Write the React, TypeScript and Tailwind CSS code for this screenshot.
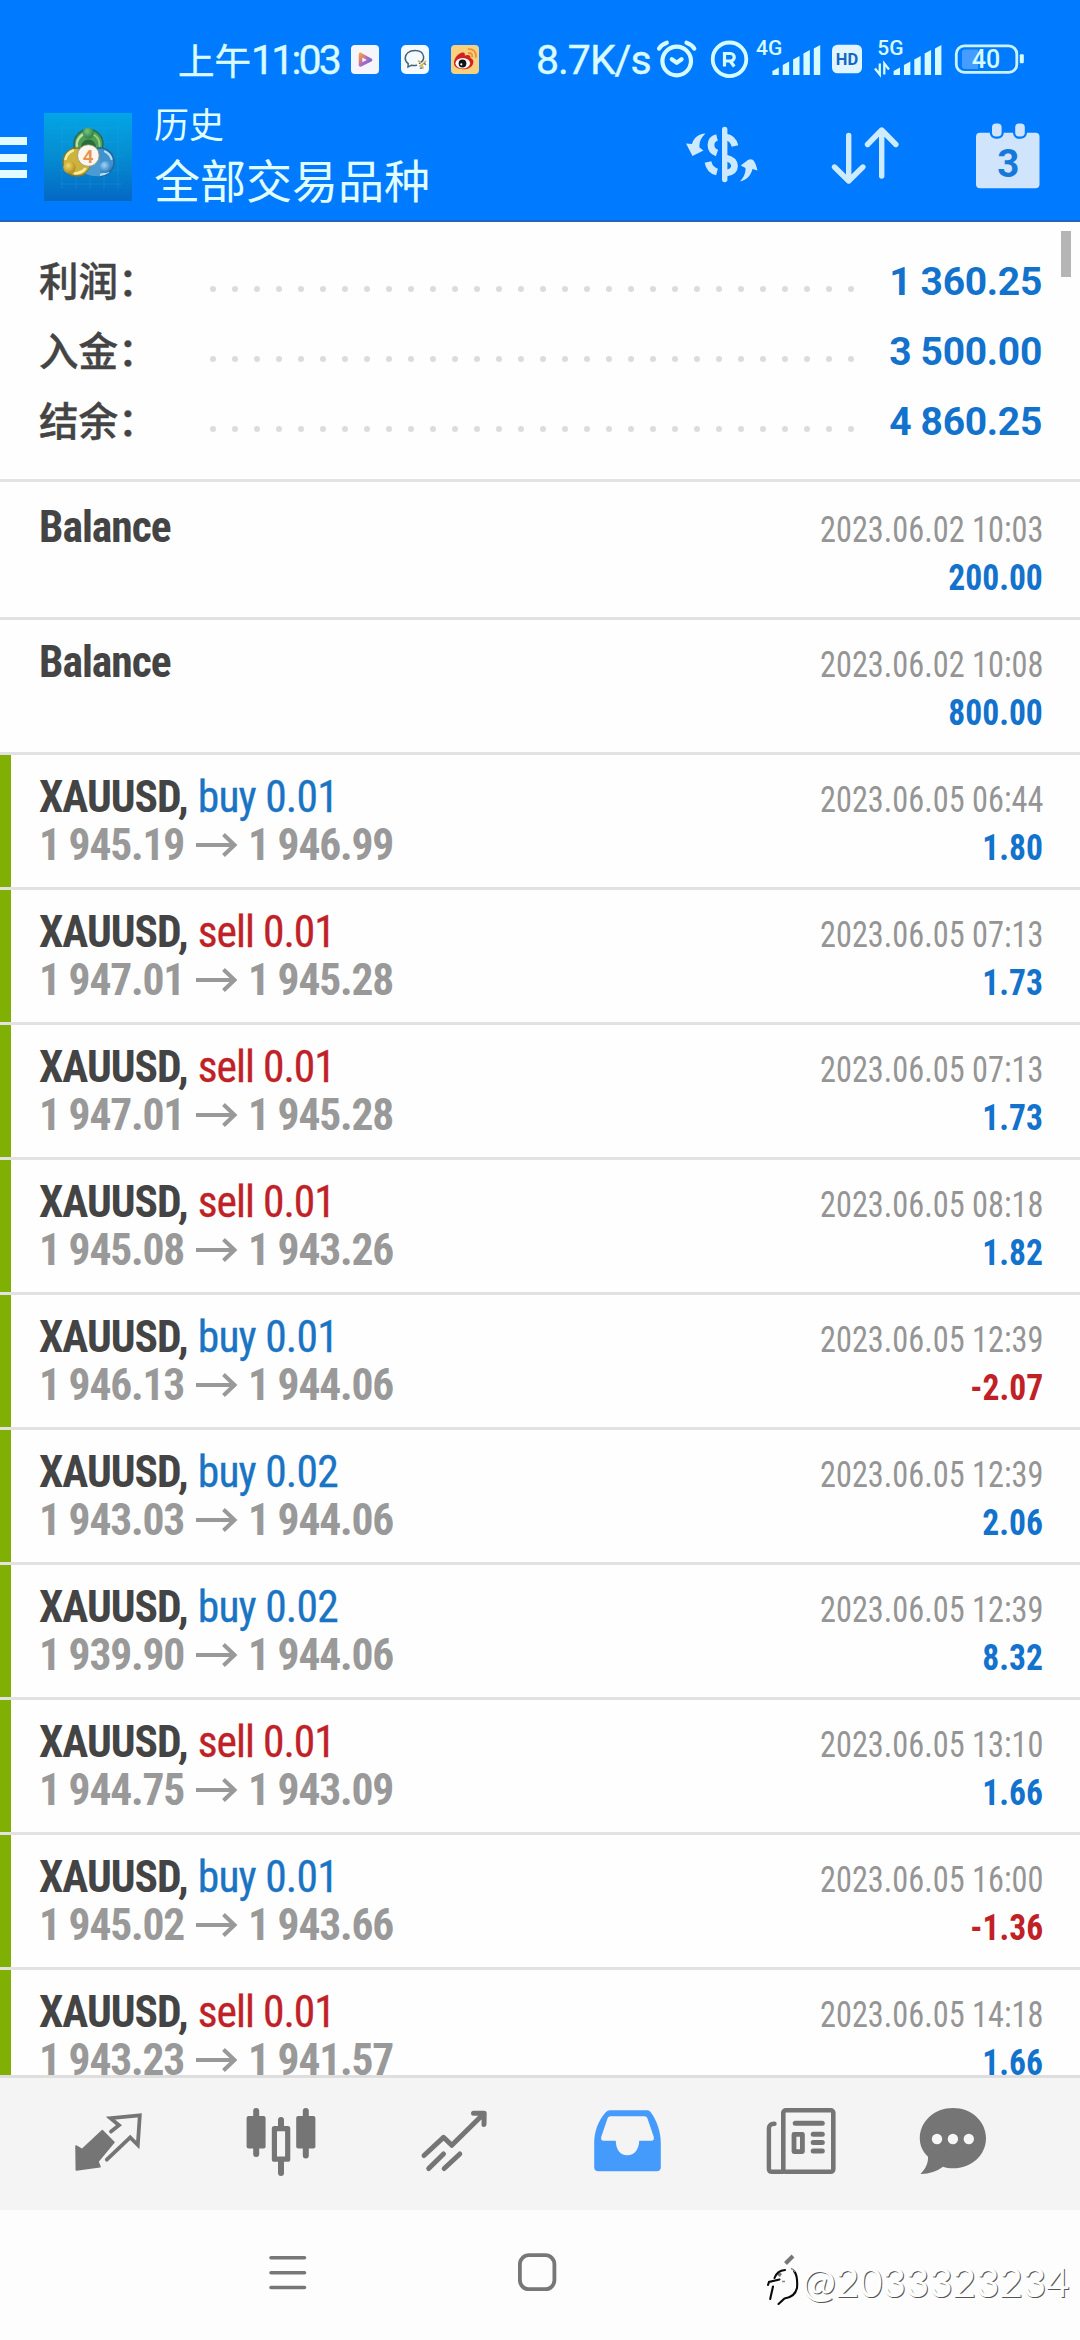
import type { ReactNode } from "react";

type Trade = {
  kind: "balance" | "buy" | "sell";
  volume?: string;
  open?: string;
  close?: string;
  time: string;
  profit: string;
};

const summary = [
  { label: "利润：", value: "1 360.25" },
  { label: "入金：", value: "3 500.00" },
  { label: "结余：", value: "4 860.25" },
];

const trades: Trade[] = [
  { kind: "balance", time: "2023.06.02 10:03", profit: "200.00" },
  { kind: "balance", time: "2023.06.02 10:08", profit: "800.00" },
  { kind: "buy", volume: "0.01", open: "1 945.19", close: "1 946.99", time: "2023.06.05 06:44", profit: "1.80" },
  { kind: "sell", volume: "0.01", open: "1 947.01", close: "1 945.28", time: "2023.06.05 07:13", profit: "1.73" },
  { kind: "sell", volume: "0.01", open: "1 947.01", close: "1 945.28", time: "2023.06.05 07:13", profit: "1.73" },
  { kind: "sell", volume: "0.01", open: "1 945.08", close: "1 943.26", time: "2023.06.05 08:18", profit: "1.82" },
  { kind: "buy", volume: "0.01", open: "1 946.13", close: "1 944.06", time: "2023.06.05 12:39", profit: "-2.07" },
  { kind: "buy", volume: "0.02", open: "1 943.03", close: "1 944.06", time: "2023.06.05 12:39", profit: "2.06" },
  { kind: "buy", volume: "0.02", open: "1 939.90", close: "1 944.06", time: "2023.06.05 12:39", profit: "8.32" },
  { kind: "sell", volume: "0.01", open: "1 944.75", close: "1 943.09", time: "2023.06.05 13:10", profit: "1.66" },
  { kind: "buy", volume: "0.01", open: "1 945.02", close: "1 943.66", time: "2023.06.05 16:00", profit: "-1.36" },
  { kind: "sell", volume: "0.01", open: "1 943.23", close: "1 941.57", time: "2023.06.05 14:18", profit: "1.66" },
];

const dots = Array.from({ length: 30 }, (_, i) => i);

function SignalBars({ x }: { x: number }) {
  const tops = [31.5, 25.5, 20, 14, 9];
  return (
    <g fill="#d6fbff">
      {tops.map((t, i) => {
        const l = x + i * 10.35;
        return <path key={i} d={`M${l} ${t + 3.5}L${l + 6.4} ${t}V39H${l}Z`} />;
      })}
    </g>
  );
}

function StatusBar() {
  return (
    <div className="flex h-[98px] items-start pt-[36px] text-[#d9fbff]">
      <div className="ml-[178px] flex h-12 w-[163px] shrink-0 items-center whitespace-nowrap">
        <span className="font-['Noto_Sans_CJK_SC',sans-serif] text-[36.5px] leading-[42px] [-webkit-text-stroke:0.5px_#d9fbff]">上午</span>
        <span className="font-['Roboto',sans-serif] text-[41px] leading-[48px] tracking-[-2.8px] [-webkit-text-stroke:0.4px_#d9fbff]">11:03</span>
      </div>
      <svg className="ml-[10px] mt-[9px] shrink-0" width="28" height="29" viewBox="0 0 28 29">
        <defs>
          <linearGradient id="play" x1="0" y1="0" x2="1" y2="1">
            <stop offset="0" stopColor="#f19a4b" />
            <stop offset=".5" stopColor="#b46ab8" />
            <stop offset="1" stopColor="#5a6fe0" />
          </linearGradient>
        </defs>
        <rect width="28" height="29" rx="4" fill="#f4f6fb" />
        <path d="M9.5 9.500v10.500L19.500 15Z" fill="none" stroke="url(#play)" strokeWidth="3.600" strokeLinejoin="round" />
      </svg>
      <svg className="ml-[22px] mt-[9px] shrink-0" width="28" height="29" viewBox="0 0 28 29">
        <rect width="28" height="29" rx="5" fill="#f3fbff" />
        <path d="M18.5 18.3C21 17 23 15 22.6 11.5C22 7.5 18.500 5.500 14 5.500C8 5.500 4.200 9 4.200 13C4.200 15.800 5.500 17.500 7.200 18.700L7 22L10.500 20.200C12 20.600 14 20.700 15.500 20.300" fill="none" stroke="#45617a" strokeWidth="1.5" strokeLinecap="round" />
        <path d="M17.500 16l2 1.500M24.500 16.500l-1.800 2M19 21l2.500-1.500M22 23l-1-2" stroke="#d9b55a" strokeWidth="1.800" strokeLinecap="round" />
        <path d="M23.300 18.500l1.200.9M20.500 23l-1 .3" stroke="#5b7f96" strokeWidth="1.500" strokeLinecap="round" />
      </svg>
      <svg className="ml-[22px] mt-[9px] shrink-0" width="28" height="29" viewBox="0 0 28 29">
        <rect width="28" height="29" rx="4" fill="#f8d07e" />
        <path d="M3 18C3 12 9 6.500 12.500 7.500C14 8 14 9.500 13.800 10.500C17 9.300 20 9.800 19.500 13C22 14 23 16 22 19C20.500 23 15.500 24.500 12 24.300C7 24 3 22 3 18Z" fill="#d0231e" />
        <ellipse cx="11.800" cy="18.300" rx="7.300" ry="5.200" fill="#fff" />
        <circle cx="11.500" cy="18.500" r="3.900" fill="#151515" />
        <circle cx="10.300" cy="19.300" r="1.100" fill="#fff" />
        <path d="M17.500 4.200C22 3.500 25.500 7 24.800 12M17.800 8C20.300 7.800 21.500 9.300 21.200 11.500" fill="none" stroke="#e8933a" strokeWidth="1.800" strokeLinecap="round" />
      </svg>
      <span className="ml-[57px] h-12 w-[114px] shrink-0 whitespace-nowrap font-['Roboto',sans-serif] text-[41px] leading-[48px] tracking-[-1px] [-webkit-text-stroke:0.4px_#d9fbff]">
        8.7K/s
      </span>
      <svg className="shrink-0" width="50" height="48" viewBox="0 0 50 48" fill="none" stroke="#d6fbff" strokeWidth="4.200" strokeLinecap="round" strokeLinejoin="round">
        <circle cx="26.700" cy="25" r="14.300" />
        <path d="M21.800 23.200l4.900 3.600 4.900-3.600M9 12.600Q11.500 8.500 16.800 6.700M44.300 12.600Q41.800 8.500 36.500 6.700" />
      </svg>
      <svg className="shrink-0" width="54" height="48" viewBox="50 0 54 48">
        <circle cx="79.500" cy="23.300" r="16.800" fill="none" stroke="#d6fbff" strokeWidth="3.800" />
        <path d="M74.500 30.500V17.500H80.500A3.600 3.600 0 0 1 80.500 25H75M80.500 25.500L84.300 30.500" fill="none" stroke="#d6fbff" strokeWidth="3.200" />
      </svg>
      <svg className="shrink-0" width="72" height="48" viewBox="104 0 72 48">
        <text x="106" y="18.700" fill="#d6fbff" fontFamily="Roboto, sans-serif" fontSize="21" fontWeight="500">4G</text>
        <SignalBars x={122.4} />
      </svg>
      <svg className="shrink-0" width="42" height="48" viewBox="176 0 42 48">
        <rect x="182" y="8.700" width="30" height="28.600" rx="5.500" fill="#e0f5ff" />
        <text x="197" y="29" textAnchor="middle" fill="#1467c4" fontFamily="Roboto, sans-serif" fontSize="16.500" fontWeight="700">HD</text>
      </svg>
      <svg className="shrink-0" width="80" height="48" viewBox="218 0 80 48">
        <text x="227.300" y="18.700" fill="#d6fbff" fontFamily="Roboto, sans-serif" fontSize="21" fontWeight="500">5G</text>
        <path d="M229.800 27.500V38.500L225 32.500M234.300 38.500V27.500L239 33.500" fill="none" stroke="#d6fbff" strokeWidth="2.300" />
        <SignalBars x={243.6} />
      </svg>
      <svg className="shrink-0" width="82" height="48" viewBox="298 0 82 48">
        <rect x="306.300" y="9.800" width="60.500" height="26.600" rx="8" fill="none" stroke="#c9f4ff" strokeWidth="2.800" />
        <rect x="369.800" y="18.300" width="4" height="9" rx="1" fill="#d6fbff" />
        <path d="M315 13.500H328V33H315A3 3 0 0 1 312 30V16.500A3 3 0 0 1 315 13.500Z" fill="#469cff" />
        <text x="336" y="32.200" textAnchor="middle" fill="#d6fbff" fontFamily="Roboto, sans-serif" fontSize="25" fontWeight="500">40</text>
      </svg>
    </div>
  );
}

function Logo() {
  return (
    <svg className="ml-[17px] mt-[15px] shrink-0" width="88" height="88" viewBox="0 0 88 88">
      <defs>
        <linearGradient id="logoBg" x1="0" y1="0" x2="0" y2="1">
          <stop offset="0" stopColor="#03a5e6" />
          <stop offset=".45" stopColor="#058fd2" />
          <stop offset="1" stopColor="#0468c4" />
        </linearGradient>
        <radialGradient id="gBall" cx=".4" cy=".35" r=".7"><stop offset="0" stopColor="#7cc47a" /><stop offset="1" stopColor="#237a45" /></radialGradient>
        <radialGradient id="yBall" cx=".4" cy=".35" r=".7"><stop offset="0" stopColor="#f3da62" /><stop offset="1" stopColor="#a8861c" /></radialGradient>
        <radialGradient id="bBall" cx=".4" cy=".35" r=".7"><stop offset="0" stopColor="#9fd6f5" /><stop offset="1" stopColor="#1f6fb8" /></radialGradient>
      </defs>
      <rect width="88" height="88" fill="url(#logoBg)" />
      <path d="M16 15H78M16 29H78M16 43H78M16 57H78M16 71H78M18 12V76M32 12V76M46 12V76M60 12V76M74 12V76" stroke="#2fb0e8" strokeOpacity=".22" />
      <circle cx="44.500" cy="31" r="14.500" fill="#4f9d52" stroke="#2a6b50" strokeWidth="1.500" />
      <path d="M33 34A11.500 11.500 0 0 1 42 20.500" fill="none" stroke="#b9dfa6" strokeWidth="2.400" strokeLinecap="round" />
      <path d="M48 21A11 11 0 0 1 55.500 33" fill="none" stroke="#8fce84" strokeWidth="2" strokeLinecap="round" />
      <circle cx="44.500" cy="34" r="7.500" fill="#2b6a3c" />
      <circle cx="56" cy="49" r="14" fill="#3f92cd" stroke="#23669c" strokeWidth="1.500" />
      <path d="M61 38.500A12 12 0 0 1 67.500 46M47 60Q56 64.500 64 59" fill="none" stroke="#b4def6" strokeWidth="2.200" strokeLinecap="round" />
      <circle cx="33" cy="49" r="14" fill="#cdb23c" stroke="#7d7a35" strokeWidth="1.500" />
      <path d="M21.500 46A12 12 0 0 1 29 37.500M31 60.500Q37 60 41 56" fill="none" stroke="#f8ee9c" strokeWidth="2.600" strokeLinecap="round" />
      <path d="M41 60.500C45 58 47 54 47.300 49L56 44V63C50 63.500 45 62.500 41 60.500Z" fill="#4a9bd4" />
      <circle cx="44.300" cy="20" r="5.600" fill="url(#gBall)" />
      <circle cx="25.500" cy="54.500" r="6.200" fill="url(#yBall)" />
      <circle cx="61.500" cy="54" r="6" fill="url(#bBall)" />
      <circle cx="44.300" cy="42.500" r="10.800" fill="#fbf6f0" stroke="#8c8f6a" strokeWidth=".8" />
      <text x="44.300" y="49.500" textAnchor="middle" fill="#e8934a" fontFamily="Roboto, sans-serif" fontSize="19" fontWeight="600">4</text>
    </svg>
  );
}

function Toolbar() {
  return (
    <div className="flex h-[122px] items-start">
      <div className="mt-[39px] flex w-[27px] shrink-0 flex-col gap-[8.500px]">
        <i className="h-2 bg-[#e2fbff]" />
        <i className="h-2 bg-[#e2fbff]" />
        <i className="h-2 bg-[#e2fbff]" />
      </div>
      <Logo />
      <div className="ml-[22px] w-[290px] pt-[3px] font-['Noto_Sans_CJK_SC',sans-serif] font-normal text-[#e0fdff]">
        <div className="text-[35px] leading-[44px]">历史</div>
        <div className="mt-[5px] text-[46px] leading-[56px]">全部交易品种</div>
      </div>
      <svg className="ml-auto mt-[22px] shrink-0" width="84" height="68" viewBox="0 0 84 68" fill="none" stroke="#cde9fd">
        <path d="M44.700 9.500V59.500" strokeWidth="5.400" strokeLinecap="round" />
        <path d="M37 17.500Q31 19 31 25Q31 31 37 33M28 42Q29.500 50 37 52M46 17Q53 18 55 26M46 38Q54.500 40 54.500 46Q54.500 52 46 53" strokeWidth="6.800" />
        <path d="M25.500 13.500C18 14 13.500 18 12 24L6 23.500L12.500 36L23.500 30.500L19.500 27.500C19 22 21.500 17 25.500 13.500ZM60 61.500C63.500 58 65.800 53 65.500 48L60.700 45.500L68 40C72 38 75 39.500 77.500 50.500L72.500 49C71 55 67 60 60 61.500Z" fill="#cde9fd" stroke="none" />
      </svg>
      <svg className="ml-[62px] mt-[22px] shrink-0" width="78" height="68" viewBox="0 0 78 68" fill="none" stroke="#cdebfd" strokeWidth="5.400" strokeLinecap="round" strokeLinejoin="round">
        <path d="M22.700 15.500V61M8.500 47L22.700 61L36.900 47M55.700 56V10.500M41.500 24.500L55.700 10L69.900 24.500" />
      </svg>
      <svg className="ml-[66px] mr-[34px] mt-[18px] shrink-0" width="76" height="76" viewBox="0 0 76 76">
        <rect x="6" y="16.700" width="63.500" height="55.500" rx="4" fill="#d0e5fc" />
        <rect x="22" y="7.500" width="9.600" height="13" rx="4" fill="#d0e5fc" stroke="#007bff" strokeWidth="4.500" paintOrder="stroke" />
        <rect x="45.200" y="7.500" width="9.600" height="13" rx="4" fill="#d0e5fc" stroke="#007bff" strokeWidth="4.500" paintOrder="stroke" />
        <text x="38.200" y="60.500" textAnchor="middle" fill="#1579dc" fontFamily="Roboto, sans-serif" fontSize="38.500" fontWeight="700">3</text>
      </svg>
    </div>
  );
}

function Summary() {
  return (
    <section className="mb-[3px] h-[260px] shrink-0 border-b-[3px] border-[#e3e3e3] pl-[39px] pr-[38px] pt-[25px]">
      {summary.map((row) => (
        <div key={row.label} className="flex h-[70px] items-center">
          <span className="w-[171px] shrink-0 whitespace-nowrap pb-[7px] font-['Noto_Sans_CJK_SC',sans-serif] text-[39.500px] font-medium leading-[50px] text-[#444] [-webkit-text-stroke:0.4px_#444]">
            {row.label}
          </span>
          <span className="flex shrink-0 gap-4 pt-[14px]">
            {dots.map((d) => (
              <i key={d} className="size-[6px] rounded-full bg-[#dcdcdc]" />
            ))}
          </span>
          <span className="ml-auto whitespace-nowrap font-['Roboto',sans-serif] text-[39px] font-bold leading-[70px] tracking-[-0.3px] text-[#1272cc]">
            {row.value}
          </span>
        </div>
      ))}
    </section>
  );
}

function TradeRow({ trade }: { trade: Trade }) {
  const isBalance = trade.kind === "balance";
  const loss = trade.profit.startsWith("-");
  return (
    <li className="flex h-[135px] shrink-0 border-b-[3px] border-[#e2e2e2]">
      <div className={isBalance ? "w-[11px] shrink-0" : "w-[11px] shrink-0 bg-[#7fb003]"} />
      <div className="flex grow justify-between pl-7 pr-[37px] font-['Roboto_Condensed',sans-serif]">
        <div className="whitespace-nowrap pt-[19px] text-[43.500px] leading-[48px] text-[#444]">
          <div>
            <span className="font-bold tracking-[-1px]">{isBalance ? "Balance" : "XAUUSD,"}</span>
            {!isBalance && (
              <span className={trade.kind === "buy" ? "ml-[10px] tracking-[-0.800px] text-[#1a74c4] [-webkit-text-stroke:0.3px_#1a74c4]" : "ml-[10px] tracking-[-1px] text-[#c02127] [-webkit-text-stroke:0.3px_#c02127]"}>
                {trade.kind} {trade.volume}
              </span>
            )}
          </div>
          {!isBalance && (
            <div className="flex items-center font-bold tracking-[-1.200px] text-[#999]">
              <span className="w-[157px]">{trade.open}</span>
              <svg width="42" height="24" viewBox="0 0 42 24" className="mb-[2px]" fill="none" stroke="#999" strokeWidth="4">
                <path d="M0 12H38M27.500 1.500L38.500 12L27.500 22.500" />
              </svg>
              <span className="ml-[10px]">{trade.close}</span>
            </div>
          )}
        </div>
        <div className="flex flex-col items-end whitespace-nowrap pt-[21px] text-[36.500px] leading-[48px]">
          <div className="origin-right scale-x-[0.885] text-[#959595]">{trade.time}</div>
          <div className={loss ? "origin-right scale-x-[0.92] font-bold text-[#c02127]" : "origin-right scale-x-[0.92] font-bold text-[#1272cc]"}>{trade.profit}</div>
        </div>
      </div>
    </li>
  );
}

function TabIcon({ children, className }: { children: ReactNode; className: string }) {
  return (
    <svg width="80" height="80" viewBox="0 0 80 80" fill="none" stroke="#757575" strokeLinecap="round" strokeLinejoin="round" className={className}>
      {children}
    </svg>
  );
}

function TabBar() {
  return (
    <nav className="flex h-[135px] shrink-0 items-start border-t-[3px] border-[#dedede] bg-[#f4f4f4] pl-[68px] pt-6">
      <TabIcon className="shrink-0">
        <path d="M8 44L14 47.500L34.300 28.500L46 40.300L30 59.500L32 64.700L8.300 68Z" fill="#757575" strokeWidth="1.500" />
        <path d="M43 29.500L51 23.300L42.500 16.200L71.800 13.300L69.800 43L62.200 35.300L38.800 57.700" strokeWidth="3.800" strokeLinejoin="miter" />
      </TabIcon>
      <TabIcon className="ml-[93px] shrink-0">
        <rect x="5.600" y="14" width="19" height="32.500" rx="2" fill="#757575" stroke="none" />
        <rect x="55.200" y="14" width="19.200" height="32.500" rx="2" fill="#757575" stroke="none" />
        <path d="M15.200 9V52M64.800 9V53.500M40 18V26M40 58V71" strokeWidth="6" />
        <rect x="33.400" y="26.700" width="13.300" height="30.500" strokeWidth="5.200" />
      </TabIcon>
      <TabIcon className="ml-[93px] shrink-0">
        <path d="M10 53.500L29.500 35.300L37.800 43.300L69.500 12M59.500 11.300H70.200L70 22.500M14.700 66.500L29.500 52M30.200 66.500L45.800 52" strokeWidth="5" />
      </TabIcon>
      <TabIcon className="ml-[93px] shrink-0">
        <path
          d="M23 8.300H60Q62.500 8.300 64 10.500C70 19 73.800 30 73.800 41V65Q73.800 69.300 69.500 69.300H11.500Q7.200 69.300 7.200 65V41C7.200 30 11 19 18.500 10.500Q20.500 8.300 23 8.300ZM23.500 14.300Q21.500 14.300 20.700 16L14.200 35Q13.500 38.700 16.500 38.700H28.800C28.800 47 33 53.300 40.300 53.300S52 47 52.200 38.700H64.500Q67.500 38.700 66.800 35L60.300 16Q59.500 14.300 57.500 14.300Z"
          fill="#459bfb"
          fillRule="evenodd"
          stroke="none"
        />
      </TabIcon>
      <TabIcon className="ml-[94px] shrink-0">
        <rect x="22.300" y="8.300" width="50" height="61.500" rx="2.500" strokeWidth="4.600" />
        <path d="M13.500 21.800C10 21.500 7.900 23.500 7.900 27V67Q7.900 69.800 11 69.800H22" strokeWidth="4.400" />
        <path d="M34.200 21.300H61.300M52.200 32.300H61.300M52.200 40.500H61.300M52.200 49H61.300" strokeWidth="5" />
        <rect x="33" y="32.400" width="8.400" height="17.200" strokeWidth="4.800" />
      </TabIcon>
      <TabIcon className="ml-[72px] shrink-0">
        <path d="M40 6C58.500 6 73 19.300 73 36.200S58.500 66.300 40 66.300C36.500 66.300 33 65.800 30 64.800C24 69.500 15 72.300 7.500 72C12.500 67 15.500 61 15 54.800C9.700 49.500 6.800 43.500 6.800 36.200C6.800 19.300 21.500 6 40 6Z" fill="#757575" stroke="none" />
        <g fill="#f6f6f6" stroke="none">
          <circle cx="24" cy="37" r="5.200" />
          <circle cx="39.900" cy="37" r="5.200" />
          <circle cx="55.800" cy="37" r="5.200" />
        </g>
      </TabIcon>
    </nav>
  );
}

function SystemNav() {
  return (
    <div className="relative flex h-[130px] shrink-0 items-start bg-[#fdfdfd] pl-[269px] pt-[42px]">
      <svg width="38" height="42" viewBox="0 0 38 42" stroke="#777" strokeWidth="3.600" strokeLinecap="round">
        <path d="M2 5.800H35.500M2 20.700H35.500M2 35.500H35.500" />
      </svg>
      <svg className="ml-[210px]" width="40" height="42" viewBox="0 0 40 42" fill="none" stroke="#777" strokeWidth="3.800">
        <rect x="2.900" y="3.200" width="34.500" height="34" rx="9" />
      </svg>
      <svg className="ml-[209px]" width="80" height="56" viewBox="0 0 80 56" fill="none">
        <path d="M19.500 11.500L27 4" stroke="#777" strokeWidth="4" />
        <path d="M11.500 21L15 23.500" stroke="#777" strokeWidth="3.500" />
        <path d="M8.500 26Q11 18.500 19 18M2 33L3 30L13.500 27.500M7 34.500L4.200 47M28 19Q32 24 31 36Q29 45 18.500 46.500L12.500 52" stroke="#0a0a0a" strokeWidth="2.100" strokeLinecap="round" />
        <path d="M25 16.500Q28 17.500 29 20M16 29.500H19" stroke="#888" strokeWidth="1.400" />
      </svg>
      <span className="absolute left-[802px] top-[48px] whitespace-nowrap font-['Lato',sans-serif] text-[40.300px] leading-[48px] text-[#fefefe] [text-shadow:1px_1px_0.5px_#555]">
        @2033323234
      </span>
    </div>
  );
}

export default function App() {
  return (
    <main className="flex h-[2340px] w-[1080px] flex-col overflow-hidden bg-[#fefefe]">
      <header className="h-[222px] shrink-0 border-b-2 border-[#2266b8] bg-[#007bff]">
        <StatusBar />
        <Toolbar />
      </header>
      <div className="relative flex min-h-0 grow flex-col overflow-hidden">
        <Summary />
        <ul className="flex flex-col">
          {trades.map((trade, i) => (
            <TradeRow key={i} trade={trade} />
          ))}
        </ul>
        <div className="absolute right-[9px] top-[9px] h-[46px] w-[10px] bg-[#b5b5b5]" />
      </div>
      <TabBar />
      <SystemNav />
    </main>
  );
}
